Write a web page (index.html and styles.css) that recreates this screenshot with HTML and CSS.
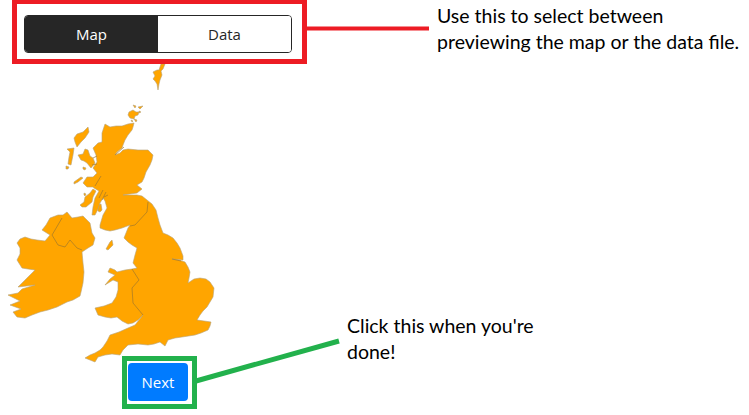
FILE: index.html
```html
<!DOCTYPE html>
<html lang="en">
<head>
<meta charset="utf-8">
<title>Preview</title>
<link rel="stylesheet" href="styles.css">
</head>
<body>
<main class="page">
  <section class="preview">
    <div class="toggle">
      <button class="toggle-btn is-active" type="button">Map</button>
      <button class="toggle-btn" type="button">Data</button>
    </div>
    <svg class="map" viewBox="0 53 220 310" width="220" height="310" aria-label="Map of the UK and Ireland">
      <g class="land">
        <path d="M161 64L165 64L163 69L161 71L162 75L160 80L159 84L158 90L157 84L155 81L153 79L155 76L153 72L157 70L159 70Z"/>
        <path d="M129 112L133 110L136 112L139 112L138 115L135 116L134 119L130 118L128 115Z"/>
        <path d="M133 105L136 106L135 108ZM138 107L143 106L140 109ZM139 111L141 112L139 113ZM134 119L137 120L136 122ZM131 120L133 121L132 122Z"/>
        <path d="M88 127L89 132L85 138L81 142L77 147L75 142L74 138L77 134L83 132Z"/>
        <path d="M67 149L74 148L73 155L72 160L71 165L68 164L69 157L70 152Z"/>
        <path d="M78 155L83 154L85 149L88 150L90 156L93 158L95 163L91 168L87 163L84 161L81 160Z"/>
        <path d="M66 166L69 167L68 169L66 169ZM83 167L86 168L85 170L83 169Z"/>
        <path d="M74 182L81 177L83 178L78 182L74 184Z"/>
        <path d="M80 205L84 202L85 197L90 193L93 189L96 191L93 197L92 202L86 207L82 207Z"/>
        <path d="M84 193L86 194L85 196L84 195Z"/>
        <path d="M97 205L101 204L102 210L100 212L98 211Z"/>
        <path d="M106 249L110 242L112 240L113 245L108 250Z"/>
        <path d="M105 124L110 127L116 126L122 126L128 124L134 123L133 127L132 130L128 135L125 140L123 145L122 148L117 152L115 155L120 153L123 150L128 149L138 150L148 150L153 155L152 160L150 165L146 172L144 178L142 182L137 185L142 189L137 193L123 195L137 195L142 196L147 200L152 204L156 210L158 218L160 225L163 233L168 235L173 238L177 243L180 248L183 256L183 260L172 259L179 260L185 262L188 267L190 272L189 278L188 283L194 279L200 278L206 279L210 282L214 288L213 297L210 302L207 307L203 311L200 315L197 320L204 321L211 322L210 326L208 330L201 333L195 335L182 337L175 338L168 340L165 346L160 342L154 344L148 345L138 344L128 345L123 350L120 355L112 354L105 355L98 357L95 362L90 360L85 358L90 355L95 353L100 350L103 347L107 341L110 335L119 332L128 328L135 325L143 315L138 320L133 323L128 324L122 321L117 317L111 318L105 317L98 315L95 308L104 306L112 303L116 297L118 290L118 282L113 280L105 285L110 279L115 275L108 272L110 268L115 270L117 272L125 270L132 269L137 268L133 263L135 255L137 248L132 245L128 242L124 238L126 233L128 228L130 225L122 228L115 230L110 231L105 230L100 228L100 225L103 215L107 208L105 201L103 198L100 203L98 209L95 215L92 215L93 207L95 198L99 191L94 188L93 187L87 187L83 183L87 177L93 177L97 173L93 168L97 162L96 155L93 148L98 143L102 142L102 133Z"/>
        <path d="M20 239L25 237L31 239L37 240L45 241L50 235L42 230L46 225L50 218L58 215L63 215L67 212L72 218L78 217L83 216L90 223L92 233L95 238L93 245L88 248L82 252L83 263L84 272L83 283L81 292L80 296L73 300L67 302L57 307L48 310L40 312L32 315L25 318L17 317L13 312L21 309L10 305L20 301L8 295L18 293L22 289L35 285L18 287L23 282L28 277L35 270L28 269L22 268L17 260L20 254L20 248L17 243Z"/>
      </g>
      <g class="border">
        <path d="M62 218L55 230L52 235L58 245L65 247L70 240L77 248L82 250"/>
        <path d="M148 202L147 212L135 225L130 226"/>
        <path d="M132 269L139 280L132 288L133 303L143 315"/>
        <path d="M115 155L124 147M101 176L95 186M103 190L99 198M106 192L102 200M108 195L104 197M92 165L97 164M93 158L97 156M172 259L181 261"/>
      </g>
    </svg>
    <button class="next" type="button">Next</button>
  </section>

  <div class="callout-box callout-red"></div>
  <div class="callout-box callout-green"></div>
  <svg class="leaders" width="749" height="415" aria-hidden="true">
    <line class="leader-red" x1="306" y1="28.5" x2="429" y2="28.5"/>
    <line class="leader-green" x1="196" y1="381" x2="339" y2="341"/>
  </svg>
  <p class="note note-top">Use this to select between<br>previewing the map or the data file.</p>
  <p class="note note-bottom">Click this when you're<br>done!</p>
</main>
</body>
</html>
```

FILE: styles.css
```css
* { box-sizing: border-box; }

html, body {
  margin: 0;
  background: #fff;
}

.page {
  position: relative;
  width: 749px;
  height: 415px;
  overflow: hidden;
  font-family: "Open Sans", "Liberation Sans", sans-serif;
}

.preview {
  display: flex;
  flex-direction: column;
  align-items: flex-start;
  padding: 15px 0 0 0;
}

.toggle {
  display: flex;
  width: 268px;
  height: 38px;
  margin-left: 24px;
  border: 1px solid #262626;
  border-radius: 4px;
  overflow: hidden;
}

.toggle-btn {
  flex: 1;
  border: 0;
  padding: 0;
  background: #fff;
  color: #262626;
  font: 400 15px "Open Sans", sans-serif;
}

.toggle-btn.is-active {
  background: #262626;
  color: #fff;
  font-weight: 500;
}

.map { display: block; }

.land path {
  fill: #ffa500;
  stroke: #b5a37a;
  stroke-width: 0.6;
  stroke-linejoin: round;
}

.border path {
  fill: none;
  stroke: #a2782a;
  stroke-width: 0.7;
}

.next {
  width: 60px;
  height: 38px;
  margin-left: 128px;
  border: 0;
  border-radius: 4px;
  background: #007bff;
  color: #fff;
  font: 400 15px "Open Sans", sans-serif;
}

.callout-box {
  position: absolute;
  border-style: solid;
  border-width: 5px;
}

.callout-red {
  left: 12px;
  top: -1px;
  width: 295px;
  height: 65px;
  border-color: #ed1c24;
}

.callout-green {
  left: 122px;
  top: 356px;
  width: 75px;
  height: 53px;
  border-color: #22b14c;
}

.leaders {
  position: absolute;
  left: 0;
  top: 0;
}

.leader-red {
  stroke: #ed1c24;
  stroke-width: 4;
}

.leader-green {
  stroke: #22b14c;
  stroke-width: 5;
}

.note {
  position: absolute;
  margin: 0;
  font: 400 19.5px/26px "Lato", "Open Sans", sans-serif;
  color: #000;
  white-space: nowrap;
}

.note-top { left: 437px; top: 3px; }
.note-bottom { left: 347px; top: 313px; }
```
